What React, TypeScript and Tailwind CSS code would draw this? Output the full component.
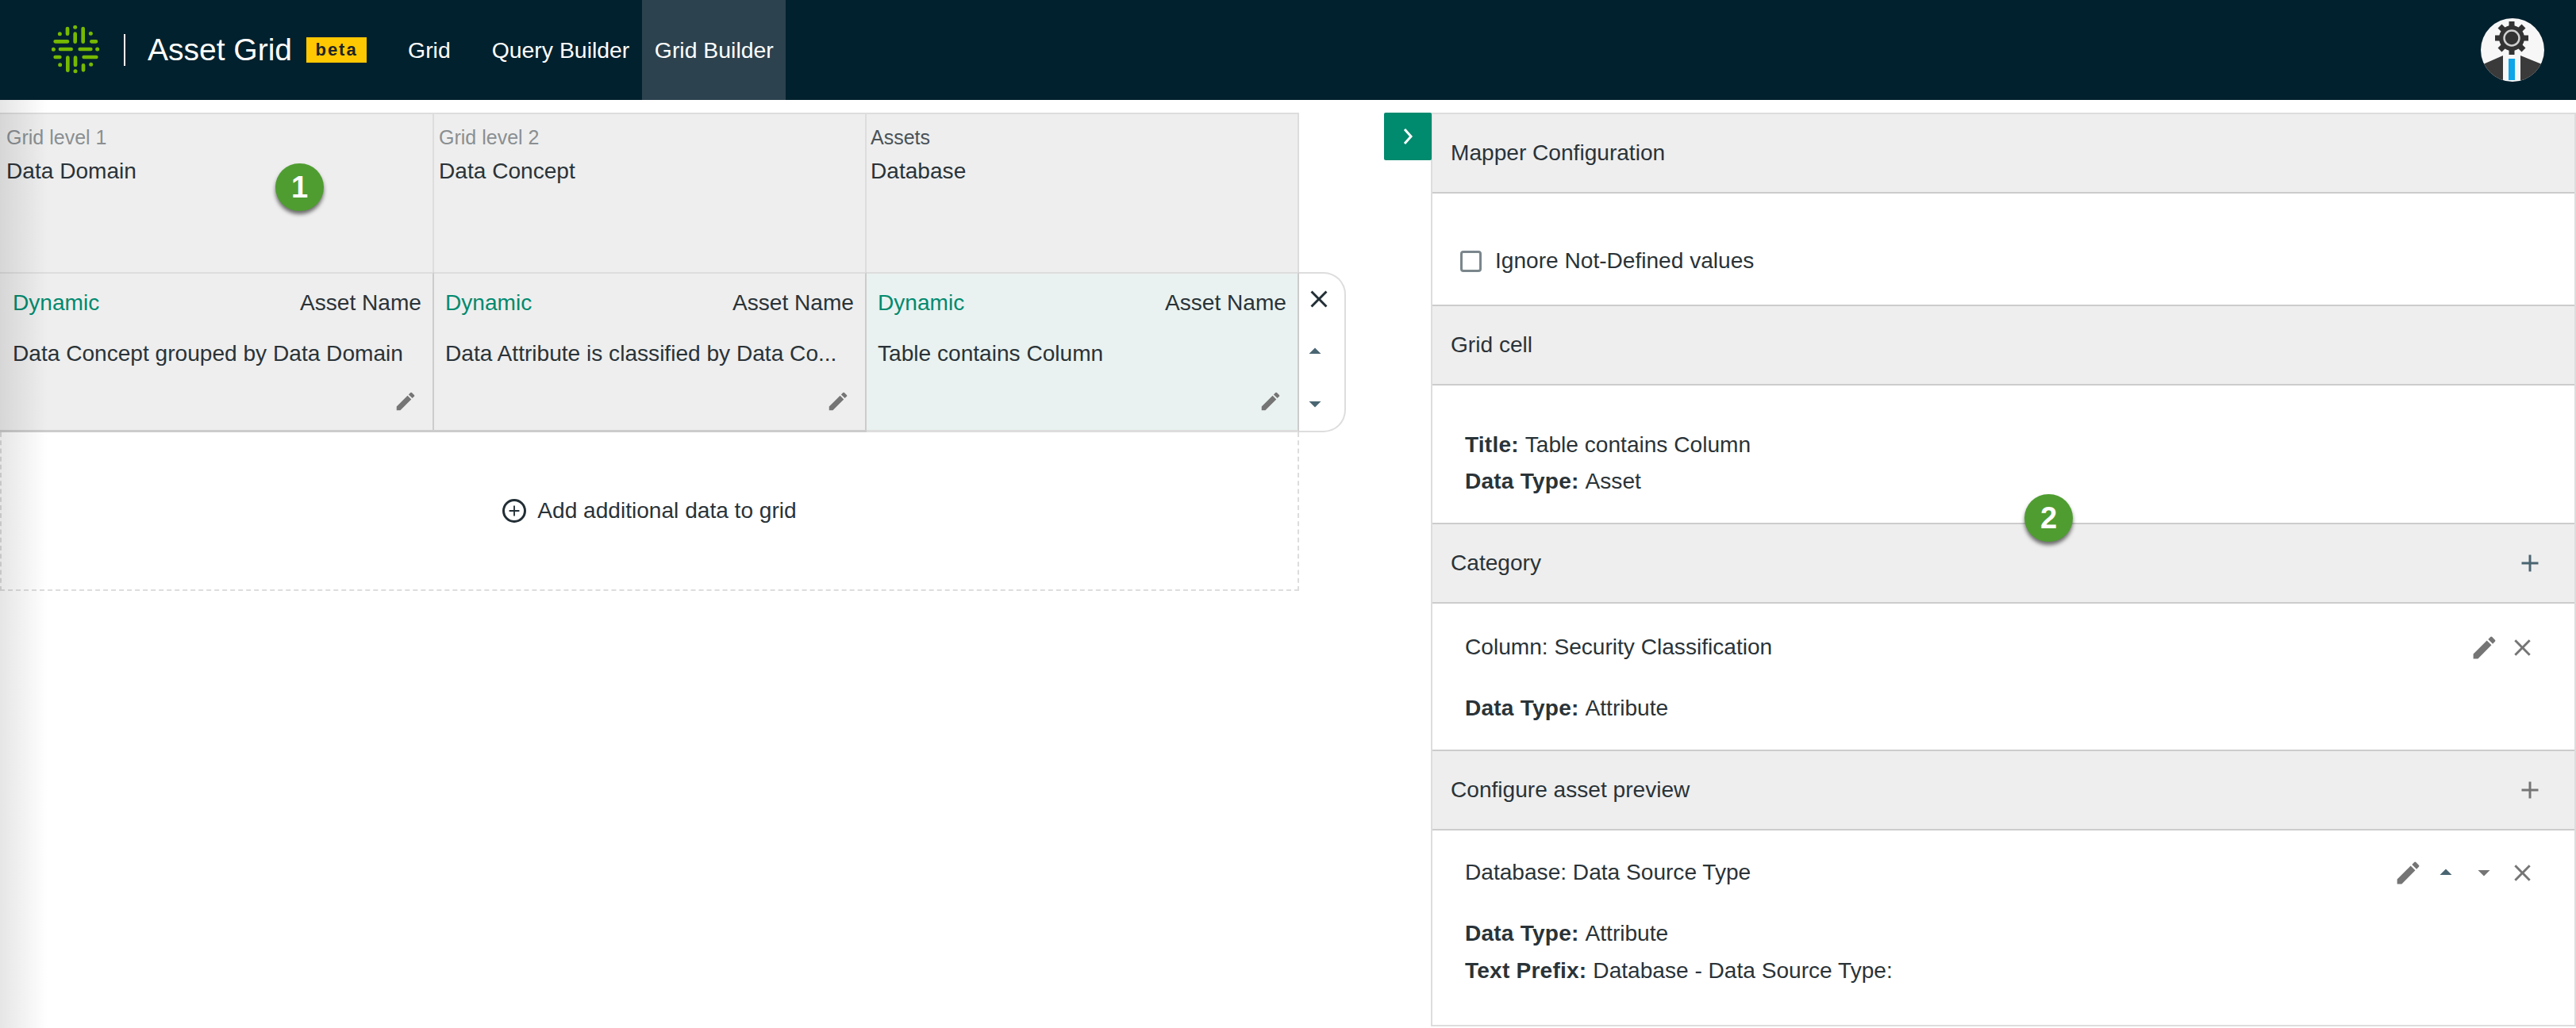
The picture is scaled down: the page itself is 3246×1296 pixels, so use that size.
import { MdAdd, MdArrowDropDown, MdArrowDropUp, MdClose, MdEdit } from "react-icons/md";

const cols = [
  {
    level: "Grid level 1",
    levelClass: "text-[#8a8f92]",
    name: "Data Domain",
    desc: "Data Concept grouped by Data Domain",
    bodyClass: "bg-[#eeeeee] border-r-[#cccccc]",
    headClass: "border-r-[#dddddd]",
    width: "w-[547px]",
    pad: "pl-[8px]",
    cellPad: "pl-[16px] pr-[14px]",
    lineClass: "border-b-[#cccccc]",
  },
  {
    level: "Grid level 2",
    levelClass: "text-[#8a8f92]",
    name: "Data Concept",
    desc: "Data Attribute is classified by Data Co...",
    bodyClass: "bg-[#eeeeee] border-r-[#cccccc]",
    headClass: "border-r-[#dddddd]",
    width: "w-[545px]",
    pad: "pl-[6px]",
    cellPad: "pl-[14px] pr-[14px]",
    lineClass: "border-b-[#cccccc]",
  },
  {
    level: "Assets",
    levelClass: "text-[#4a5257]",
    name: "Database",
    desc: "Table contains Column",
    bodyClass: "bg-[#e9f2f0] border-r-[#cccccc]",
    headClass: "border-r-[#dddddd]",
    width: "w-[545px]",
    pad: "pl-[5px]",
    cellPad: "pl-[14px] pr-[14px]",
    lineClass: "border-b-[#dddddd]",
  },
];

const Logo = () => (
  <svg width="62" height="62" viewBox="108 68 186 186" className="shrink-0">
    <g stroke="#76b900" strokeWidth="14" strokeLinecap="round" fill="none">
      <path d="M168 80v20M197 100v30M227 80v50M122 129h46M259 129h17M141 158h41M215 158h41M122 188h17M230 188h47M169 190v48M198 190v28M228 219v18" />
    </g>
    <g fill="#76b900">
      <circle cx="197" cy="75" r="7.5" />
      <circle cx="139" cy="100" r="7.5" />
      <circle cx="256" cy="99" r="7.5" />
      <circle cx="115" cy="159" r="7.5" />
      <circle cx="281" cy="158" r="7.5" />
      <circle cx="140" cy="217" r="7.5" />
      <circle cx="257" cy="216" r="7.5" />
      <circle cx="198" cy="241" r="7.5" />
    </g>
  </svg>
);

const Avatar = () => (
  <svg width="80" height="80" viewBox="0 0 80 80" className="rounded-full bg-[#f7f7f7] shrink-0">
    <path d="M3 78V58l25-11v31zM77 78V58L50 47v31z" fill="#3a3a3a" />
    <rect x="35" y="51" width="8" height="27" fill="#0ea5e9" />
    <g stroke="#333333" strokeWidth="7">
      <path d="M39 4v42M18 25h42M24 10l30 30M54 10L24 40" />
    </g>
    <circle cx="39" cy="25" r="16" fill="#333333" />
    <circle cx="39" cy="25" r="9.5" fill="none" stroke="#cfcfcf" strokeWidth="2.5" />
  </svg>
);

const Badge = ({ n, className }: { n: string; className: string }) => (
  <div
    className={`absolute w-[61px] h-[60px] rounded-full bg-[#4f9d31] text-white font-bold text-[38px] flex items-center justify-center shadow-[0_4px_5px_rgba(0,0,0,0.55)] ${className}`}
  >
    {n}
  </div>
);

const PanelHead = ({ title, plusClass }: { title: string; plusClass?: string }) => (
  <div className="h-[100px] bg-[#eeeeee] border-b-2 border-[#cccccc] pl-[23px] pr-[38px] flex items-center justify-between">
    <span>{title}</span>
    {plusClass && <MdAdd size={36} className={plusClass} />}
  </div>
);

const Field = ({ label, value }: { label: string; value: string }) => (
  <div>
    <b className="font-bold tracking-[0.2px]">{label}: </b>
    {value}
  </div>
);

const IconBox = ({ children }: { children: React.ReactNode }) => (
  <span className="w-[48px] h-[48px] flex items-center justify-center">{children}</span>
);

const App = () => {
  return (
    <div className="relative w-full h-screen overflow-hidden bg-white font-['Liberation_Sans',Arial,sans-serif] text-[28.1px] leading-[46px] text-[#2a3338]">
      {/* Top bar */}
      <header className="h-[126px] bg-[#02212e] flex items-center pl-[65px] pr-[40px] text-white">
        <Logo />
        <span className="ml-[29px] w-[2px] h-[40px] bg-white" />
        <span className="ml-[28px] text-[39px] font-light">Asset Grid</span>
        <span className="ml-[18px] w-[76px] h-[32px] bg-[#ffc800] text-[#1d2428] text-[22px] font-bold tracking-[2px] leading-[32px] text-center">
          beta
        </span>
        <nav className="ml-[19px] flex h-full items-stretch text-[28.4px]">
          <a className="pl-[33px] pr-[29px] flex items-center">Grid</a>
          <a className="pl-[23px] pr-[16px] flex items-center">Query Builder</a>
          <a className="w-[181px] bg-[#2c424f] flex items-center justify-center">Grid Builder</a>
        </nav>
        <div className="ml-auto">
          <Avatar />
        </div>
      </header>

      <main className="flex pt-[16px] items-start">
        {/* Grid builder */}
        <div className="w-[1803px] shrink-0">
          <div className="flex h-[201px] w-[1637px] border-t-2 border-[#dddddd] bg-[#eeeeee]">
            {cols.map((c) => (
              <div key={c.level} className={`${c.width} ${c.pad} border-r-2 ${c.headClass} pt-[7px]`}>
                <div className={`text-[25px] leading-[44px] ${c.levelClass}`}>{c.level}</div>
                <div className="leading-[42px]">{c.name}</div>
              </div>
            ))}
          </div>
          <div className="flex items-stretch h-[202px]">
            {cols.map((c) => (
              <div
                key={c.level}
                className={`${c.width} ${c.bodyClass} ${c.cellPad} ${c.lineClass} border-t-2 border-t-[#dddddd] border-r-2 border-b-[3px] pt-[14px] relative`}
              >
                <div className="flex justify-between">
                  <span className="text-[#008a6e]">Dynamic</span>
                  <span>Asset Name</span>
                </div>
                <div className="mt-[18px] whitespace-nowrap">{c.desc}</div>
                <MdEdit size={30} className="absolute right-[19px] bottom-[21px] text-[#757575]" />
              </div>
            ))}
            <div className="w-[59px] border-y-2 border-r-2 border-[#dddddd] rounded-r-[28px] flex flex-col pl-[2px]">
              <MdClose size={36} className="mt-[14px] ml-[5px] text-[#222e35]" />
              <MdArrowDropUp size={36} className="mt-[30px] text-[#4a6572]" />
              <MdArrowDropDown size={36} className="mt-[30px] text-[#4a6572]" />
            </div>
          </div>
          <div className="w-[1637px] h-[200px] border-2 border-t-0 border-dashed border-[#dddddd] flex items-center justify-center">
            <span className="w-[30px] h-[30px] rounded-full border-[3px] border-[#222e35] flex items-center justify-center">
              <MdAdd size={22} className="text-[#222e35]" />
            </span>
            <span className="ml-[14px]">Add additional data to grid</span>
          </div>
        </div>

        {/* Side panel */}
        <div className="relative flex-1 min-w-0 border-x-2 border-[#dddddd] border-b-2 border-t-2 h-[1152px]">
          <button className="absolute -left-[61px] -top-[2px] w-[60px] h-[60px] bg-[#008a6e] rounded-[2px] flex items-center justify-center">
            <svg width="14" height="24" viewBox="0 0 14 24" fill="none" stroke="white" strokeWidth="3">
              <path d="M3 3l8 9-8 9" />
            </svg>
          </button>
          <PanelHead title="Mapper Configuration" />
          <div className="h-[142px] border-b-2 border-[#cccccc] pl-[35px] pt-[62px] flex items-start">
            <span className="w-[27px] h-[27px] mt-[10px] rounded-[4px] border-[3px] border-[#7a868c]" />
            <span className="ml-[17px]">Ignore Not-Defined values</span>
          </div>
          <PanelHead title="Grid cell" />
          <div className="h-[175px] border-b-2 border-[#cccccc] pl-[41px] pt-[52px]">
            <Field label="Title" value="Table contains Column" />
            <Field label="Data Type" value="Asset" />
          </div>
          <PanelHead title="Category" plusClass="text-[#4a6572]" />
          <div className="h-[186px] border-b-2 border-[#cccccc] pl-[41px] pr-[42px] pt-[31px]">
            <div className="flex items-center justify-between h-[48px]">
              <span>Column: Security Classification</span>
              <span className="flex">
                <IconBox><MdEdit size={37} className="text-[#757575]" /></IconBox>
                <IconBox><MdClose size={35} className="text-[#757575]" /></IconBox>
              </span>
            </div>
            <div className="mt-[30px]">
              <Field label="Data Type" value="Attribute" />
            </div>
          </div>
          <PanelHead title="Configure asset preview" plusClass="text-[#757575]" />
          <div className="pl-[41px] pr-[42px] pt-[29px]">
            <div className="flex items-center justify-between h-[48px]">
              <span>Database: Data Source Type</span>
              <span className="flex">
                <IconBox><MdEdit size={37} className="text-[#757575]" /></IconBox>
                <IconBox><MdArrowDropUp size={36} className="text-[#4a6572]" /></IconBox>
                <IconBox><MdArrowDropDown size={36} className="text-[#757575]" /></IconBox>
                <IconBox><MdClose size={35} className="text-[#757575]" /></IconBox>
              </span>
            </div>
            <div className="mt-[29px] leading-[47px]">
              <Field label="Data Type" value="Attribute" />
              <Field label="Text Prefix" value="Database - Data Source Type:" />
            </div>
          </div>
        </div>
      </main>

      {/* Overlays */}
      <div className="absolute left-0 top-[126px] bottom-0 w-[60px] bg-gradient-to-r from-black/10 to-transparent pointer-events-none" />
      <Badge n="1" className="left-[347px] top-[206px]" />
      <Badge n="2" className="left-[2551px] top-[623px]" />
    </div>
  );
};

export default App;
